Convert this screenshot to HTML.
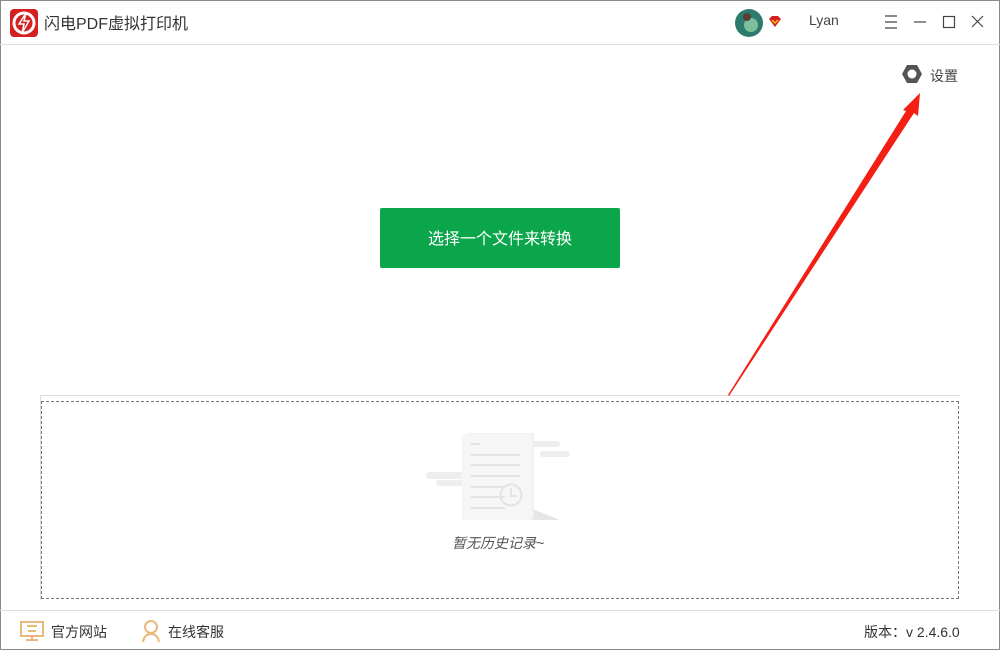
<!DOCTYPE html>
<html><head><meta charset="utf-8"><style>
*{margin:0;padding:0;box-sizing:border-box}
body{width:1000px;height:650px;overflow:hidden;background:#fff;font-family:"Liberation Sans","Noto Sans CJK SC",sans-serif;position:relative;color:#333}
.win{position:absolute;left:0;top:0;width:1000px;height:650px;border:1px solid #8a8a8a}
.hdr{position:absolute;left:0;top:0;width:1000px;height:45px;border-bottom:1px solid #dcdcdc}
.t{position:absolute;font-size:15px;color:#333;white-space:nowrap}
.btn{position:absolute;left:380px;top:208px;width:240px;height:60px;background:#0ba64b;border-radius:2px;color:#fff;font-size:16px;text-align:center;line-height:64px}
.box{position:absolute;left:40px;top:395px;width:920px;height:205px;border-top:1px solid #ddd;border-left:1px solid #ddd}
.dash{position:absolute;left:41px;top:401px;width:918px;height:198px;border:1px dashed #777}
.ftr{position:absolute;left:0;top:610px;width:1000px;height:1px;background:#dcdcdc}
</style></head><body>
<div class="win"></div>
<div class="hdr"></div>
<svg style="position:absolute;left:10px;top:9px" width="28" height="28" viewBox="0 0 28 28">
<rect width="28" height="28" rx="4" fill="#d42020"/>
<circle cx="14" cy="14" r="10" fill="none" stroke="#fff" stroke-width="3"/>
<path d="M16 4 L9 15 L14 15 L12 24 L19 12 L14 12 Z" fill="#d42020" stroke="#fff" stroke-width="1.5"/>
</svg>
<div class="t" style="left:44px;top:10px;font-size:16px">闪电PDF虚拟打印机</div>
<svg style="position:absolute;left:734px;top:8px" width="30" height="30"><circle cx="15" cy="15" r="14" fill="#2f7a6e"/><circle cx="17" cy="17" r="7" fill="#7cbf9a"/><circle cx="13" cy="9" r="4" fill="#5a3d30"/></svg>
<svg style="position:absolute;left:768px;top:15px" width="14" height="14"><path d="M1 4 L4 1 L10 1 L13 4 L7 12 Z" fill="#d02020"/><path d="M4 5 L7 8 L10 5" stroke="#f5c400" stroke-width="1.5" fill="none"/></svg>
<div class="t" style="left:809px;top:12px;font-size:14px;color:#444">Lyan</div>
<svg style="position:absolute;left:880px;top:12px" width="110" height="20" stroke="#444" stroke-width="1.2" fill="none">
<path d="M5 4H17M5 10H17M5 16H17"/><path d="M34 10H46"/><rect x="63.5" y="4.5" width="11" height="11"/><path d="M92 4L103 15M103 4L92 15"/>
</svg>
<svg style="position:absolute;left:901px;top:63px" width="22" height="22"><path d="M6 2H16L21 11L16 20H6L1 11Z" fill="#555"/><circle cx="11" cy="11" r="4.5" fill="#fff"/></svg>
<div class="t" style="left:930px;top:66px;font-size:14px;color:#444">设置</div>
<div class="btn">选择一个文件来转换</div>
<div class="box"></div>
<div class="dash"></div>
<svg style="position:absolute;left:725px;top:88px" width="200" height="310"><path d="M3 307 L181 23 L178 22 L195 5 L193 28 L189 25 L4 308 Z" fill="#f41f14"/></svg>
<svg style="position:absolute;left:420px;top:430px" width="160" height="100">
<rect x="6" y="42" width="40" height="7" rx="3.5" fill="#eee"/><rect x="16" y="50" width="30" height="6" rx="3" fill="#eee"/>
<rect x="108" y="11" width="32" height="6" rx="3" fill="#eee"/><rect x="120" y="21" width="30" height="6" rx="3" fill="#eee"/>
<path d="M58 90 L140 90 L115 80 Z" fill="#e6e6e6"/>
<rect x="48" y="3" width="66" height="85" fill="#f1f1f1"/><rect x="42" y="4" width="70" height="86" fill="#f6f6f6"/>
<g stroke="#e3e3e3" stroke-width="2"><path d="M51 14H60M51 25H100M51 35H100M51 46H100M51 57H85M51 67H85M51 78H85"/></g>
<circle cx="91" cy="65" r="10.5" fill="none" stroke="#e3e3e3" stroke-width="2"/><path d="M91 58V66H97" stroke="#e3e3e3" stroke-width="2" fill="none"/>
</svg>
<div class="t" style="left:452px;top:533px;font-size:14px;font-style:italic;color:#555">暂无历史记录~</div>
<div class="ftr"></div>
<svg style="position:absolute;left:19px;top:620px" width="26" height="22" fill="none" stroke="#e8b97a" stroke-width="2"><rect x="2" y="2" width="22" height="14"/><path d="M8 6H18M9 11H17M13 16V20M7 20H19"/></svg>
<div class="t" style="left:51px;top:622px;font-size:14px">官方网站</div>
<svg style="position:absolute;left:141px;top:619px" width="20" height="24" fill="none" stroke="#e8b97a" stroke-width="2"><circle cx="10" cy="8" r="6"/><path d="M2 23C3 17 6 15 10 15C14 15 17 17 18 23"/></svg>
<div class="t" style="left:168px;top:622px;font-size:14px">在线客服</div>
<div class="t" style="left:864px;top:622px;font-size:14px">版本：v 2.4.6.0</div>
</body></html>
